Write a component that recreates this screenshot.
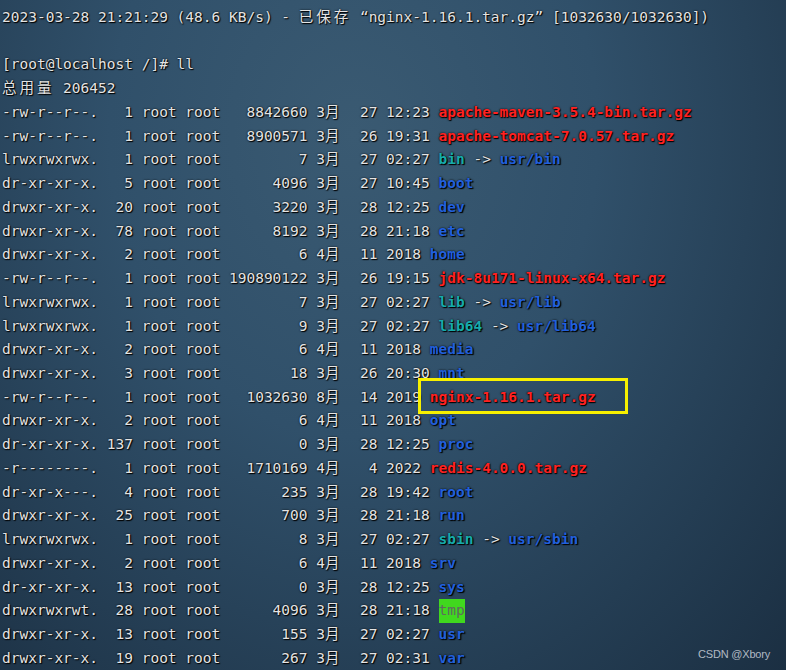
const rows = [
  ["-rw-r--r--.", 1, 8842660, 3, 27, "12:23", "apache-maven-3.5.4-bin.tar.gz", "file"],
  ["-rw-r--r--.", 1, 8900571, 3, 26, "19:31", "apache-tomcat-7.0.57.tar.gz", "file"],
  ["lrwxrwxrwx.", 1, 7, 3, 27, "02:27", "bin", "link", "usr/bin"],
  ["dr-xr-xr-x.", 5, 4096, 3, 27, "10:45", "boot", "dir"],
  ["drwxr-xr-x.", 20, 3220, 3, 28, "12:25", "dev", "dir"],
  ["drwxr-xr-x.", 78, 8192, 3, 28, "21:18", "etc", "dir"],
  ["drwxr-xr-x.", 2, 6, 4, 11, "2018", "home", "dir"],
  ["-rw-r--r--.", 1, 190890122, 3, 26, "19:15", "jdk-8u171-linux-x64.tar.gz", "file"],
  ["lrwxrwxrwx.", 1, 7, 3, 27, "02:27", "lib", "link", "usr/lib"],
  ["lrwxrwxrwx.", 1, 9, 3, 27, "02:27", "lib64", "link", "usr/lib64"],
  ["drwxr-xr-x.", 2, 6, 4, 11, "2018", "media", "dir"],
  ["drwxr-xr-x.", 3, 18, 3, 26, "20:30", "mnt", "dir"],
  ["-rw-r--r--.", 1, 1032630, 8, 14, "2019", "nginx-1.16.1.tar.gz", "file"],
  ["drwxr-xr-x.", 2, 6, 4, 11, "2018", "opt", "dir"],
  ["dr-xr-xr-x.", 137, 0, 3, 28, "12:25", "proc", "dir"],
  ["-r--------.", 1, 1710169, 4, 4, "2022", "redis-4.0.0.tar.gz", "file"],
  ["dr-xr-x---.", 4, 235, 3, 28, "19:42", "root", "dir"],
  ["drwxr-xr-x.", 25, 700, 3, 28, "21:18", "run", "dir"],
  ["lrwxrwxrwx.", 1, 8, 3, 27, "02:27", "sbin", "link", "usr/sbin"],
  ["drwxr-xr-x.", 2, 6, 4, 11, "2018", "srv", "dir"],
  ["dr-xr-xr-x.", 13, 0, 3, 28, "12:25", "sys", "dir"],
  ["drwxrwxrwt.", 28, 4096, 3, 28, "21:18", "tmp", "tmp"],
  ["drwxr-xr-x.", 13, 155, 3, 27, "02:27", "usr", "dir"],
  ["drwxr-xr-x.", 19, 267, 3, 27, "02:31", "var", "dir"],
];

// a CJK glyph takes two terminal cells
function Wide({ children }) {
  return <span className="inline-block w-[17.46px] text-left">{children}</span>;
}

function Name({ name, kind, target }) {
  if (kind === "file") return <span className="font-bold text-[#ff2222]">{name}</span>;
  if (kind === "dir") return <span className="font-bold text-[#2260dc]">{name}</span>;
  if (kind === "tmp")
    return <span className="inline-block bg-[#40d81e] text-[#5e6b5e] [text-shadow:none]">{name}</span>;
  return (
    <>
      <span className="font-bold text-[#17abab]">{name}</span>
      {" -> "}
      <span className="font-bold text-[#2260dc]">{target}</span>
    </>
  );
}

export default function App() {
  return (
    <div className="relative h-[670px] w-[786px] overflow-hidden bg-[radial-gradient(ellipse_at_45%_20%,#3a5a72_0%,#30506a_40%,#1b2f42_100%)]">
      <div className="pl-[2px] pt-[6px] font-['DejaVu_Sans_Mono','Noto_Sans_CJK_SC',monospace] text-[14.5px] leading-[23.74px] text-[#e4e4e4] whitespace-pre [text-shadow:0_0_2px_#000,1px_1px_1px_#000]">
        <div>
          {"2023-03-28 21:21:29 (48.6 KB/s) - "}
          <Wide>已</Wide>
          <Wide>保</Wide>
          <Wide>存</Wide>
          {" “nginx-1.16.1.tar.gz” [1032630/1032630])"}
        </div>
        <div>{" "}</div>
        <div>[root@localhost /]# ll</div>
        <div>
          <Wide>总</Wide>
          <Wide>用</Wide>
          <Wide>量</Wide>
          {" 206452"}
        </div>
        {rows.map(([perm, links, size, month, day, time, name, kind, target]) => (
          <div key={name}>
            {perm + String(links).padStart(4) + " root root" + String(size).padStart(10) + " " + month}
            <Wide>月</Wide>
            {String(day).padStart(4) + " " + time + " "}
            <Name name={name} kind={kind} target={target} />
          </div>
        ))}
      </div>

      {/* highlight box drawn over the nginx line */}
      <div className="absolute left-[418px] top-[378px] h-[36px] w-[210px] border-[3px] border-[#f7f000]" />

      <div className="absolute bottom-[8px] right-[16px] font-['Liberation_Sans',sans-serif] text-[11px] tracking-[-0.2px] text-[#d8dde2]/80">
        CSDN @Xbory
      </div>
    </div>
  );
}
